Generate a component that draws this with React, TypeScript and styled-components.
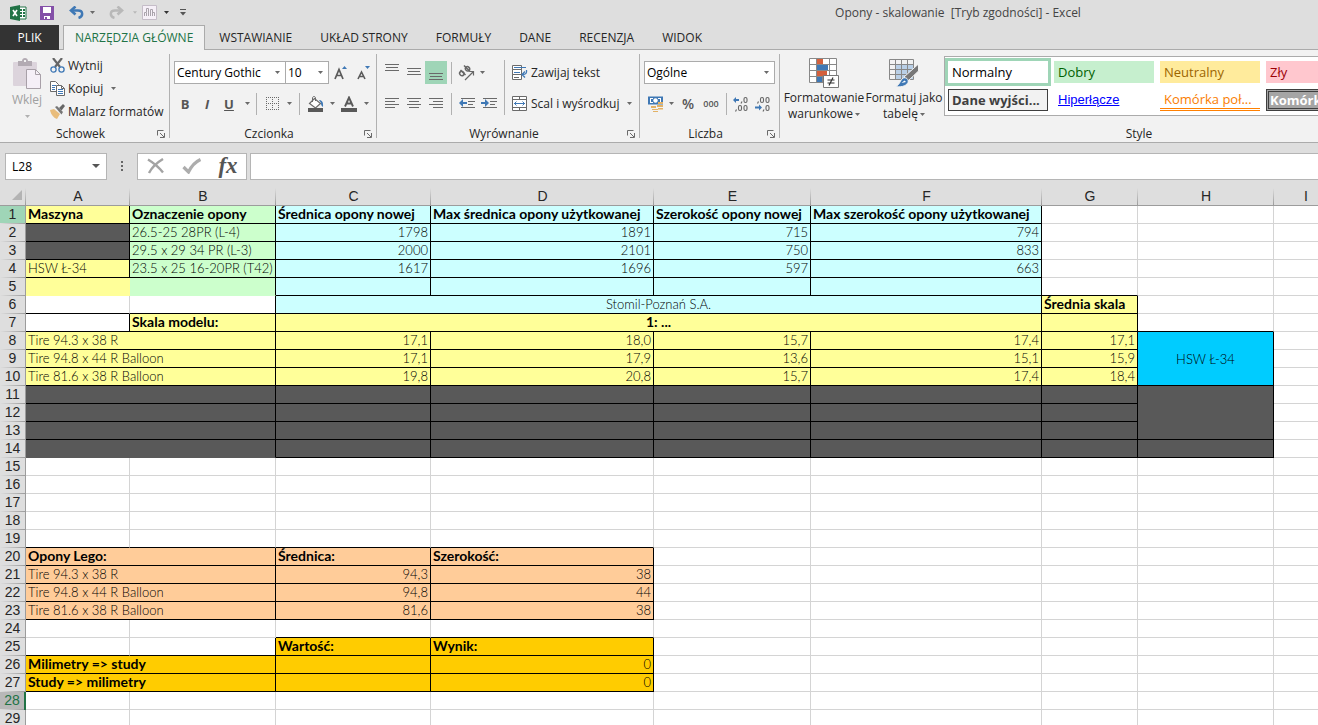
import React from "react";
import styled, { createGlobalStyle, css } from "styled-components";

const UI = `"Segoe UI", "Open Sans", "Noto Sans", sans-serif`;
const SHEET = `"Century Gothic", "Lato", sans-serif`;
const HEAD = `"Liberation Sans", Arial, sans-serif`;

const Global = createGlobalStyle`
  * { box-sizing: border-box; }
  body { margin: 0; background: #fff; }
  button, input, select { font: inherit; color: inherit; }
`;

/* ---------- frame ---------- */

const Window = styled.div`
  display: flex;
  flex-direction: column;
  height: 100vh;
  overflow: hidden;
  background: #dedede;
  color: #262626;
  font: 12px/16px ${UI};
`;

const TitleBar = styled.header`
  display: flex;
  align-items: center;
  flex: none;
  height: 25px;
`;

const QuickAccess = styled.div`
  display: flex;
  align-items: center;
  flex: none;
  width: 200px;
  height: 22px;
  padding-left: 10px;
`;

const Title = styled.h1`
  flex: 1;
  margin: 0;
  padding-left: 398px;
  font-size: 12px;
  font-weight: 400;
  line-height: 24px;
  text-align: center;
  white-space: pre;
  color: #444;
`;

const Tabs = styled.nav`
  display: flex;
  flex: none;
  height: 25px;
  border-bottom: 1px solid #ababab;
`;

const Tab = styled.button<{ $kind?: "file" | "active" }>`
  height: 25px;
  padding: 0 13px;
  border: 1px solid transparent;
  border-bottom: 0;
  background: none;
  white-space: nowrap;
  line-height: 24px;
  ${(p) => p.$kind === "file" && css`
    width: 59px;
    margin-right: 4px;
    background: #333;
    color: #fff;
  `}
  ${(p) => p.$kind === "active" && css`
    padding: 0 11px;
    border-color: #ababab;
    background: #f2f2f2;
    color: #217346;
  `}
`;

/* ---------- ribbon ---------- */

const Ribbon = styled.div`
  display: flex;
  flex: none;
  height: 93px;
  overflow: hidden;
  border-bottom: 1px solid #ababab;
  background: #f2f2f2;
`;

const Group = styled.section<{ $w: number }>`
  display: flex;
  flex-direction: column;
  flex: none;
  width: ${(p) => p.$w}px;
  padding: 4px 4px 0;
`;

const GroupBody = styled.div`
  display: flex;
  flex: none;
  height: 72px;
`;

const GroupFoot = styled.div`
  display: flex;
  align-items: center;
  height: 16px;
`;

const GroupName = styled.span`
  flex: 1;
  text-align: center;
`;

const Divider = styled.i<{ $m?: string; $h?: number }>`
  flex: none;
  width: 1px;
  height: ${(p) => (p.$h ? `${p.$h}px` : "auto")};
  margin: ${(p) => p.$m || "4px 0"};
  background: #b1b1b1;
`;

const Stack = styled.div<{ $tight?: boolean }>`
  display: flex;
  flex-direction: column;
  gap: ${(p) => (p.$tight ? 0 : 8)}px;
  padding-top: ${(p) => (p.$tight ? 0 : 7)}px;
`;

const Line = styled.div`
  display: flex;
  align-items: center;
  height: 23px;
`;

const Tool = styled.button<{ $w?: number; $on?: boolean }>`
  display: flex;
  align-items: center;
  justify-content: center;
  flex: none;
  width: ${(p) => p.$w ?? 22}px;
  height: 23px;
  padding: 0;
  border: 0;
  background: ${(p) => (p.$on ? "#9fd5b7" : "none")};
`;

const LaunchButton = styled(Tool)`
  height: 16px;
`;

const LabelTool = styled.button`
  display: flex;
  align-items: center;
  gap: 3px;
  height: 23px;
  padding: 0;
  border: 0;
  background: none;
  white-space: nowrap;
`;

const CaretBox = styled.span`
  display: flex;
  justify-content: center;
  width: 14px;
`;

const BigTool = styled.button<{ $w: number; $off?: boolean }>`
  display: flex;
  flex-direction: column;
  align-items: center;
  flex: none;
  width: ${(p) => p.$w}px;
  padding: 4px 0 0;
  border: 0;
  background: none;
  white-space: nowrap;
  color: ${(p) => (p.$off ? "#a0a0a0" : "inherit")};
  & > svg { flex: none; margin-bottom: 2px; }
`;

const BigText = styled.span`
  display: flex;
  align-items: center;
  gap: 2px;
  height: 16px;
`;

const Combo = styled.label<{ $w: number }>`
  display: flex;
  align-items: center;
  position: relative;
  flex: none;
  width: ${(p) => p.$w}px;
  height: 23px;
  border: 1px solid #ababab;
  background: #fff;
  color: #000;
  & + & { margin-left: -1px; }
  select {
    flex: 1;
    min-width: 0;
    height: 21px;
    padding: 0 16px 0 2px;
    border: 0;
    background: none;
    appearance: none;
    outline: 0;
  }
  svg { position: absolute; right: 5px; pointer-events: none; }
`;

const Glyph = styled.span<{ $size?: number; $weight?: number; $italic?: boolean; $under?: boolean }>`
  font-size: ${(p) => p.$size ?? 13}px;
  font-weight: ${(p) => p.$weight ?? 700};
  font-style: ${(p) => (p.$italic ? "italic" : "normal")};
  text-decoration: ${(p) => (p.$under ? "underline" : "none")};
  line-height: 20px;
  color: #555;
`;

const Gallery = styled.div`
  display: grid;
  grid-template-columns: repeat(5, 100px);
  grid-auto-rows: 22px;
  gap: 6px;
  flex: 1;
  height: 60px;
  margin-top: 2px;
  padding: 4px 3px;
  overflow: hidden;
  border: 1px solid #ababab;
  background: #fff;
`;

type Look = "normal" | "good" | "neutral" | "bad" | "output" | "link" | "linked" | "check";

const looks: Record<Look, ReturnType<typeof css>> = {
  normal: css`color: #000; background: #fff; outline: 3px solid #9fd5b7;`,
  good: css`color: #006100; background: #c6efce;`,
  neutral: css`color: #9c6500; background: #ffeb9c;`,
  bad: css`color: #9c0006; background: #ffc7ce;`,
  output: css`padding: 0 3px; color: #3f3f3f; background: #f2f2f2; border: 1px solid #3f3f3f; font-weight: 700;`,
  link: css`color: #0000ff; font-family: ${HEAD}; text-decoration: underline;`,
  linked: css`color: #fa7d00; border-bottom: 3px double #ff8001;`,
  check: css`padding: 0 1px; color: #fff; background: #a5a5a5; border: 3px double #3f3f3f; font-weight: 700;`,
};

const StyleItem = styled.button<{ $look: Look }>`
  width: 100px;
  height: 22px;
  padding: 0 4px;
  overflow: hidden;
  border: 0;
  background: none;
  font-size: 13px;
  line-height: 16px;
  text-align: left;
  white-space: nowrap;
  ${(p) => looks[p.$look]}
`;

/* ---------- formula bar ---------- */

const FormulaBar = styled.div`
  display: flex;
  align-items: center;
  flex: none;
  height: 45px;
  padding: 1px 0 0 5px;
`;

const Field = styled.div<{ $w?: number }>`
  display: flex;
  align-items: center;
  flex: ${(p) => (p.$w ? "none" : "1")};
  width: ${(p) => (p.$w ? `${p.$w}px` : "auto")};
  height: 27px;
  border: 1px solid #b5b5b5;
  background: #fff;
  color: #000;
  & + & { margin-left: 3px; border-right: 0; }
  input {
    flex: 1;
    min-width: 0;
    height: 25px;
    padding: 0 6px;
    border: 0;
    background: none;
    outline: 0;
  }
`;

const Dots = styled.span`
  display: flex;
  justify-content: center;
  width: 30px;
`;

/* ---------- sheet ---------- */

const SheetArea = styled.main`
  flex: 1;
  min-height: 0;
  overflow: hidden;
  background: #fff;
`;

const Sheet = styled.table`
  width: 100%;
  min-width: 1338px;
  table-layout: fixed;
  border-spacing: 0;
  color: #000;
`;

const ColHead = styled.th`
  height: 18px;
  padding: 0;
  border-bottom: 1px solid #9c9c9c;
  background: linear-gradient(#dedede, #9c9c9c) right / 1px 100% no-repeat #dedede;
  font: 14px/17px ${HEAD};
  text-align: center;
  color: #262626;
`;

const RowHead = styled.th<{ $state?: "hover" | "active" }>`
  height: 18px;
  padding: 0;
  border-right: 1px solid #9c9c9c;
  background: linear-gradient(90deg, #dedede, #9c9c9c) bottom / 100% 1px no-repeat #dedede;
  font: 14px/16px ${HEAD};
  vertical-align: top;
  text-align: center;
  color: #262626;
  ${(p) => p.$state === "hover" && css`background-color: #9fd5b7;`}
  ${(p) => p.$state === "active" && css`
    border-right: 2px solid #217346;
    background-color: #b8b8b8;
    color: #217346;
  `}
`;

const Cell = styled.td<{ $bg?: string; $r?: string; $b?: string; $align?: string; $bold?: boolean }>`
  height: 18px;
  padding: 0 2px;
  overflow: hidden;
  border-right: 1px solid ${(p) => p.$r || "#d4d4d4"};
  border-bottom: 1px solid ${(p) => p.$b || "#d4d4d4"};
  background: ${(p) => p.$bg || "#fff"};
  font: ${(p) => (p.$bold ? "700 14px" : "300 13px")}/16px ${SHEET};
  text-align: ${(p) => p.$align || "left"};
  vertical-align: ${(p) => ((p as { rowSpan?: number }).rowSpan ? "middle" : "top")};
  white-space: nowrap;
`;

/* ---------- icons ---------- */

const G = "#6a6a6a";
const B = "#3f78b5";

const Svg = ({ w, h, children }: { w: number; h: number; children: React.ReactNode }) => (
  <svg width={w} height={h} viewBox={`0 0 ${w} ${h}`} fill="none" aria-hidden="true">{children}</svg>
);

const Caret = ({ c = "#6a6a6a" }: { c?: string }) => (
  <Svg w={5} h={3}><path d="M0 0h5L2.5 3z" fill={c} /></Svg>
);

const ExcelLogo = () => (
  <Svg w={17} h={16}>
    <path d="M9 2h7v12H9z" fill="#fff" stroke="#217346" />
    <path d="M10 4h2v2h-2zM13 4h2v2h-2zM10 7h2v2h-2zM13 7h2v2h-2zM10 10h2v2h-2zM13 10h2v2h-2z" fill="#217346" />
    <path d="M0 2l10-2v16L0 14z" fill="#217346" />
    <path d="M3 5l4 6M7 5l-4 6" stroke="#fff" strokeWidth="1.6" />
  </Svg>
);

const SaveIcon = () => (
  <Svg w={14} h={14}>
    <path d="M0 0h14v14H0z" fill="#8450a8" />
    <path d="M3 1h8v6H3z" fill="#fff" />
    <path d="M4 10h6v3H4z" fill="#fff" />
    <path d="M5 11h2v2H5z" fill="#8450a8" />
  </Svg>
);

const UndoIcon = ({ c, flip }: { c: string; flip?: boolean }) => (
  <Svg w={15} h={13}>
    <g transform={flip ? "translate(15 0) scale(-1 1)" : undefined} stroke={c}>
      <path d="M6.500 .5L2 4.500l4.500 4" strokeWidth="2.600" />
      <path d="M2 4.500h7c5.500 0 5.500 6 .5 7.500" strokeWidth="2.400" />
    </g>
  </Svg>
);

const ChartIcon = () => (
  <Svg w={15} h={15}>
    <path d="M.5.5h14v14H.5z" fill="#f6f0f8" stroke="#c5bdc8" />
    <path d="M2.500 11V7.500h2V11M4.500 7V3.500h2V11M8.500 11V4.500h2V11M10.500 7.500h2V11" stroke="#a9a3ab" />
  </Svg>
);

const CustomizeIcon = () => (
  <Svg w={6} h={7}><path d="M0 .5h6" stroke="#555" /><path d="M0 3h6L3 6.500z" fill="#555" /></Svg>
);

const PasteIcon = () => (
  <Svg w={30} h={32}>
    <rect x="1" y="4" width="24" height="24" rx="1" fill="#dcd4dc" />
    <path d="M6 3h4c0-4 6-4 6 0h4v5H6z" fill="#b3abb3" />
    <path d="M12 2h2v2h-2z" fill="#f2f2f2" />
    <path d="M14.500 11.500h9l5 5v14h-14z" fill="#f5eff7" stroke="#a8a0a8" />
    <path d="M23.500 11.500v5h5" stroke="#a8a0a8" />
  </Svg>
);

const CutIcon = () => (
  <Svg w={15} h={15}>
    <path d="M3 0l7 9M12 0L5 9" stroke="#666" strokeWidth="2.200" />
    <circle cx="3.500" cy="11.500" r="2.600" stroke={B} strokeWidth="1.300" />
    <circle cx="11.500" cy="11.500" r="2.600" stroke={B} strokeWidth="1.300" />
  </Svg>
);

const CopyIcon = () => (
  <Svg w={15} h={15}>
    <path d="M.5.5h5l3 3v7h-8z" fill="#fff" stroke={G} />
    <path d="M2 4.500h4M2 6.500h3M2 8.500h3" stroke={B} />
    <path d="M6.500 4.500h5l3 3v7h-8z" fill="#fff" stroke={G} />
    <path d="M11.500 4.500v3h3" stroke={G} />
    <path d="M8 8.500h5M8 10.500h5M8 12.500h5" stroke={B} />
  </Svg>
);

const BrushIcon = () => (
  <Svg w={15} h={15}>
    <path d="M0 6l4-1 6 5-3 5c-3-1-6-4-7-9z" fill="#e9bd7c" />
    <path d="M5 3l2-1 6 6-1.500 2.500z" fill="#777" />
    <path d="M9 4l4-4 2 2-3.500 4.500z" fill="#666" />
  </Svg>
);

const ResizeFont = ({ up }: { up?: boolean }) => (
  <Svg w={14} h={16}>
    {up
      ? <path d="M1 14L5 4.500 9 14M2.600 10.500h5" stroke="#5a5a5a" strokeWidth="1.700" />
      : <path d="M1 14L4.500 7 8 14M2.400 11.500h4.200" stroke="#5a5a5a" strokeWidth="1.600" />}
    <path d={up ? "M8 4h5l-2.500-3z" : "M8 1h5l-2.500 3z"} fill={B} />
  </Svg>
);

const BorderIcon = () => (
  <Svg w={13} h={13}>
    <path d="M0 .5h13M0 6.500h13M0 12.500h13M.5 0v13M6.500 0v13M12.500 0v13" stroke={G} strokeDasharray="1 1" />
  </Svg>
);

const BucketIcon = () => (
  <Svg w={17} h={16}>
    <path d="M2.500 7.500l5-5 6 5-5 4.500z" fill="#fff" stroke={G} strokeWidth="1.200" />
    <path d="M5.500 6V2c0-2 3-2 3 0v3" stroke={G} />
    <path d="M12 4c3 0 4.500 2 4 7-2-1-2-3-2-4z" fill={B} />
    <path d="M1 12h15v4H1z" fill="#595959" />
  </Svg>
);

const FontColorIcon = () => (
  <Svg w={16} h={16}>
    <path d="M4 10.500L8 1.500l4 9M5.500 7.500h5" stroke="#5a5a5a" strokeWidth="1.900" />
    <path d="M0 12h16v4H0z" fill="#595959" />
  </Svg>
);

const Rules = ({ rows, y = 0 }: { rows: [number, number][]; y?: number }) => (
  <Svg w={14} h={17}>
    {rows.map(([x, len], i) => <path key={i} d={`M${x} ${y + i * 3}.5h${len}`} stroke={G} />)}
  </Svg>
);

const OrientIcon = () => (
  <Svg w={18} h={16}>
    <g stroke="#666" strokeWidth="1.500">
      <ellipse cx="3.800" cy="8.500" rx="2" ry="2.300" transform="rotate(-45 3.800 8.500)" />
      <path d="M2.500 5l5 5M6 .5l6 6" />
      <ellipse cx="9.500" cy="3.800" rx="2" ry="2.200" transform="rotate(-45 9.500 3.800)" />
      <path d="M7 15l8.500-8.500M11.500 6.500h4v4" strokeWidth="1.200" />
    </g>
  </Svg>
);

const IndentIcon = ({ out }: { out?: boolean }) => (
  <Svg w={16} h={11}>
    <path d="M2 .5h14M9 3.500h7M9 6.500h5M2 9.500h14" stroke={G} />
    {out
      ? <path d="M0 5l4-4v3h4v2H4v3z" fill={B} />
      : <path d="M8 5L4 1v3H0v2h4v3z" fill={B} />}
  </Svg>
);

const WrapIcon = () => (
  <Svg w={16} h={15}>
    <path d="M.5.5h9v4h-9zM.5 4.500h9v5h-9zM.5 9.500h9v5h-9z" stroke={G} fill="#fff" />
    <path d="M2 2.500h12M2 7.500h6" stroke={B} />
    <path d="M2 12.500h5" stroke={G} />
    <path d="M14.500 5c.5 3-.5 4.500-4 4.500M13 6.500l-3 3 3 3" stroke={B} strokeWidth="1.300" />
  </Svg>
);

const MergeIcon = () => (
  <Svg w={16} h={15}>
    <path d="M.5.5h14v14H.5zM.5 3.500h14M.5 11.500h14M7.500.5v3M7.500 11.500v3" stroke={G} fill="#fff" />
    <path d="M2 7.500h11M4.500 5.500l-2 2 2 2M10.500 5.500l2 2-2 2" stroke={B} />
  </Svg>
);

const MoneyIcon = () => (
  <Svg w={17} h={16}>
    <path d="M1 .5h15v8H1z" fill={B} />
    <path d="M3 2h3v1H4v3h2v1H3zM14 2h-3v1h2v3h-2v1h3z" fill="#fff" />
    <circle cx="8.500" cy="4.500" r="2.200" fill="#fff" />
    <path d="M11 6h5v2h-5zM10 9h6v2h-6zM4 10h5v2H4zM5 13h6v1H5zM6 15h5v1H6zM11 12h5v1.500h-5z" fill="#e3b266" />
  </Svg>
);

const DecimalIcon = ({ more }: { more?: boolean }) => (
  <Svg w={16} h={16}>
    <g stroke="#666" strokeWidth="1.100">
      <path d={more ? "M9 5.500l-1 2" : "M3.500 5.500l-1 2"} />
      {!more && <rect x="5.500" y="1.500" width="3" height="5" rx="1.500" />}
      <rect x="11" y="1.500" width="3" height="5" rx="1.500" />
      <rect x="11" y="9.500" width="3" height="5" rx="1.500" />
      {more && <rect x="5.500" y="9.500" width="3" height="5" rx="1.500" />}
      <path d={more ? "M3.500 13.500l-1 2" : "M9 13.500l-1 2"} />
    </g>
    <path d={more ? "M0 4l3-3v2h3v2H3v2z" : "M7 11.500L4 8.500v2H0v2h4v2z"} fill={B} />
  </Svg>
);

const CondIcon = () => (
  <Svg w={30} h={30}>
    <path d="M.5.5h27v24H.5zM.5 6.500h27M.5 12.500h27M.5 18.500h27M7.500.5v24M13.500.5v24M20.500.5v24" fill="#fff" stroke="#888" />
    <path d="M8 1h6v5H8zM8 13h10v5H8z" fill="#d4603c" />
    <path d="M8 7h11v5H8zM8 19h5v5H8z" fill={B} />
    <path d="M14.500 17.500h15v12h-15z" fill="#fff" stroke="#777" />
    <path d="M18.500 22h7M18.500 25h7M24 19.500l-4 8" stroke="#333" strokeWidth="1.200" />
  </Svg>
);

const TableIcon = () => (
  <Svg w={30} h={30}>
    <path d="M7 7h18v14H7z" fill="#b9cfe6" />
    <path d="M.5 1.500h24v20H.5zM.5 6.500h24M.5 11.500h24M.5 16.500h24M6.500 1.500v20M12.500 1.500v20M18.500 1.500v20" stroke="#888" />
    <path d="M29.500 6v7L19 23l-4-4z" fill="#777" stroke="#f2f2f2" />
    <path d="M6 28.500c4 0 5-6 8-8.500 3-1 6 1 5 4.500-2 4-8 5-13 4z" fill={B} stroke="#f2f2f2" />
    <path d="M12.500 25l3-2.500 1.500 1.500z" fill="#fff" />
  </Svg>
);

const Launcher = () => (
  <Svg w={8} h={8}>
    <path d="M.5 5.500v-5h6" stroke={G} />
    <path d="M3 3l4 4M7.500 3v4.500H3" stroke={G} />
  </Svg>
);

const CancelIcon = () => (
  <Svg w={18} h={16}><path d="M1 1.500c5 3 11 8 15 13M16 1C11 4 5 9 2 15" stroke="#a3a3a3" strokeWidth="2.400" /></Svg>
);

const EnterIcon = () => (
  <Svg w={20} h={16}><path d="M1.500 9l5 5C9 9 13 4 18.500 1.500" stroke="#adadad" strokeWidth="3.200" /></Svg>
);

const FxGlyph = styled.span`
  font: italic 700 23px/24px "Liberation Serif", serif;
  color: #555;
`;

/* ---------- data ---------- */

type C = { t?: string; bg?: string; r?: string; b?: string; al?: string; bold?: boolean; span?: number; rows?: number };

const K = "#000";
const YEL = "#ffff99";
const GRN = "#ccffcc";
const CYN = "#ccffff";
const DRK = "#595959";
const ORG = "#ffcc99";
const GLD = "#ffcc00";

const box = (bg: string, t = "", o: C = {}): C => ({ bg, t, r: K, b: K, ...o });
const num = (bg: string, t: string): C => box(bg, t, { al: "right" });
const blank = (n: number, o: C = {}): C[] => Array.from({ length: n }, () => ({ ...o }));
const head = (bg: string, t: string, o: C = {}) => box(bg, t, { bold: true, ...o });

const measure = (a: C, b: string, v: string[]): C[] => [
  a, box(GRN, b), ...v.map((x) => num(CYN, x)), ...blank(3),
];
const scale = (t: string, v: string[]): C[] => [box(YEL, t, { span: 2 }), ...v.map((x) => num(YEL, x))];
const dark = (): C[] => [box(DRK, "", { span: 2 }), ...Array.from({ length: 5 }, () => box(DRK))];

const rows: C[][] = [
  [head(YEL, "Maszyna"), head(GRN, "Oznaczenie opony"), head(CYN, "Średnica opony nowej"),
    head(CYN, "Max średnica opony użytkowanej"), head(CYN, "Szerokość opony nowej"),
    head(CYN, "Max szerokość opony użytkowanej"), ...blank(3)],
  measure(box(DRK), "26.5-25 28PR (L-4)", ["1798", "1891", "715", "794"]),
  measure(box(DRK), "29.5 x 29 34 PR (L-3)", ["2000", "2101", "750", "833"]),
  measure(box(YEL, "HSW Ł-34"), "23.5 x 25 16-20PR (T42)", ["1617", "1696", "597", "663"]),
  [{ bg: YEL, r: YEL, b: YEL }, { bg: GRN, r: K, b: GRN }, ...Array.from({ length: 4 }, () => box(CYN)), { b: K }, ...blank(2)],
  [{ b: K }, { r: K, b: K }, box(CYN, "Stomil-Poznań S.A.", { span: 4, al: "center" }), head(YEL, "Średnia skala"), ...blank(2)],
  [{ r: K, b: K }, head(YEL, "Skala modelu:"), head(YEL, "1: ...", { span: 4, al: "center" }), box(YEL), { b: K }, {}],
  [...scale("Tire 94.3 x 38 R", ["17,1", "18,0", "15,7", "17,4", "17,1"]), box("#00ccff", "HSW Ł-34", { rows: 3, al: "center" }), {}],
  [...scale("Tire 94.8 x 44 R Balloon", ["17,1", "17,9", "13,6", "15,1", "15,9"]), {}],
  [...scale("Tire 81.6 x 38 R Balloon", ["19,8", "20,8", "15,7", "17,4", "18,4"]), {}],
  [...dark(), box(DRK, "", { rows: 3 }), {}],
  [...dark(), {}],
  [...dark(), {}],
  [box(DRK, "", { span: 2, b: DRK }), ...Array.from({ length: 6 }, () => box(DRK)), {}],
  blank(9), blank(9), blank(9), blank(9),
  [...blank(4, { b: K }), ...blank(5)],
  [head(ORG, "Opony Lego:", { span: 2 }), head(ORG, "Średnica:"), head(ORG, "Szerokość:"), ...blank(5)],
  [box(ORG, "Tire 94.3 x 38 R", { span: 2 }), num(ORG, "94,3"), num(ORG, "38"), ...blank(5)],
  [box(ORG, "Tire 94.8 x 44 R Balloon", { span: 2 }), num(ORG, "94,8"), num(ORG, "44"), ...blank(5)],
  [box(ORG, "Tire 81.6 x 38 R Balloon", { span: 2 }), num(ORG, "81,6"), num(ORG, "38"), ...blank(5)],
  [...blank(2), ...blank(2, { b: K }), ...blank(5)],
  [{ b: K }, { r: K, b: K }, head(GLD, "Wartość:"), head(GLD, "Wynik:"), ...blank(5)],
  [head(GLD, "Milimetry => study", { span: 2 }), box(GLD), num(GLD, "0"), ...blank(5)],
  [head(GLD, "Study => milimetry", { span: 2 }), box(GLD), num(GLD, "0"), ...blank(5)],
  blank(9), blank(9),
];

const columns: [string, number | undefined][] = [
  ["A", 104], ["B", 146], ["C", 155], ["D", 223], ["E", 157], ["F", 231], ["G", 96], ["H", 136], ["I", undefined],
];

const tabs = ["WSTAWIANIE", "UKŁAD STRONY", "FORMUŁY", "DANE", "RECENZJA", "WIDOK"];

const gallery: [string, Look][] = [
  ["Normalny", "normal"], ["Dobry", "good"], ["Neutralny", "neutral"], ["Zły", "bad"],
  ["Dane wyjści...", "output"], ["Hiperłącze", "link"], ["Komórka poł...", "linked"], ["Komórka zaz...", "check"],
];

const Foot = ({ name, plain }: { name: string; plain?: boolean }) => (
  <GroupFoot>
    <GroupName>{name}</GroupName>
    {!plain && <LaunchButton $w={8} aria-label={`${name} – opcje`}><Launcher /></LaunchButton>}
  </GroupFoot>
);

export default function App() {
  return (
    <Window>
      <Global />
      <TitleBar>
        <QuickAccess>
          <ExcelLogo />
          <Tool $w={40} aria-label="Zapisz"><SaveIcon /></Tool>
          <Tool $w={18} aria-label="Cofnij"><UndoIcon c={B} /></Tool>
          <Tool $w={14} aria-label="Lista cofania"><Caret /></Tool>
          <Tool $w={34} aria-label="Wykonaj ponownie"><UndoIcon c="#b8b8b8" flip /></Tool>
          <Tool $w={4} aria-label="Lista ponawiania"><Caret c="#b8b8b8" /></Tool>
          <Tool $w={24} aria-label="Wykres"><ChartIcon /></Tool>
          <Tool $w={10} aria-label="Lista wykresów"><Caret c="#333" /></Tool>
          <Tool $w={24} aria-label="Dostosuj pasek"><CustomizeIcon /></Tool>
        </QuickAccess>
        <Title>{"Opony - skalowanie  [Tryb zgodności] - Excel"}</Title>
      </TitleBar>

      <Tabs>
        <Tab $kind="file">PLIK</Tab>
        <Tab $kind="active">NARZĘDZIA GŁÓWNE</Tab>
        {tabs.map((t) => <Tab key={t}>{t}</Tab>)}
      </Tabs>

      <Ribbon>
        <Group $w={169}>
          <GroupBody>
            <BigTool $w={46} $off>
              <PasteIcon />
              <BigText>Wklej</BigText>
              <BigText><Caret c="#b0b0b0" /></BigText>
            </BigTool>
            <Stack $tight>
              <LabelTool><CutIcon />Wytnij</LabelTool>
              <LabelTool><CopyIcon />Kopiuj<CaretBox><Caret /></CaretBox></LabelTool>
              <LabelTool><BrushIcon />Malarz formatów</LabelTool>
            </Stack>
          </GroupBody>
          <Foot name="Schowek" />
        </Group>
        <Divider />

        <Group $w={206}>
          <GroupBody>
            <Stack>
              <Line>
                <Combo $w={112}>
                  <select aria-label="Czcionka"><option>Century Gothic</option></select>
                  <Caret />
                </Combo>
                <Combo $w={44}>
                  <select aria-label="Rozmiar czcionki"><option>10</option></select>
                  <Caret />
                </Combo>
                <Tool $w={24} aria-label="Zwiększ rozmiar czcionki"><ResizeFont up /></Tool>
                <Tool aria-label="Zmniejsz rozmiar czcionki"><ResizeFont /></Tool>
              </Line>
              <Line>
                <Tool aria-label="Pogrubienie"><Glyph>B</Glyph></Tool>
                <Tool aria-label="Kursywa"><Glyph $italic>I</Glyph></Tool>
                <Tool aria-label="Podkreślenie"><Glyph $under>U</Glyph></Tool>
                <Tool $w={14} aria-label="Styl podkreślenia"><Caret /></Tool>
                <Divider $m="0 4px 0 2px" $h={22} />
                <Tool aria-label="Obramowanie"><BorderIcon /></Tool>
                <Tool $w={12} aria-label="Rodzaj obramowania"><Caret /></Tool>
                <Divider $m="0 4px" $h={22} />
                <Tool aria-label="Kolor wypełnienia"><BucketIcon /></Tool>
                <Tool $w={12} aria-label="Wybór wypełnienia"><Caret /></Tool>
                <Tool aria-label="Kolor czcionki"><FontColorIcon /></Tool>
                <Tool $w={12} aria-label="Wybór koloru"><Caret /></Tool>
              </Line>
            </Stack>
          </GroupBody>
          <Foot name="Czcionka" />
        </Group>
        <Divider />

        <Group $w={262}>
          <GroupBody>
            <Stack>
              <Line>
                <Tool aria-label="Do góry"><Rules y={0} rows={[[0, 14], [1, 12], [0, 14]]} /></Tool>
                <Tool aria-label="Do środka"><Rules y={4} rows={[[0, 14], [1, 12], [0, 14]]} /></Tool>
                <Tool $on aria-label="Do dołu"><Rules y={9} rows={[[0, 14], [1, 12], [0, 14]]} /></Tool>
                <Divider $m="0 4px" $h={22} />
                <Tool aria-label="Orientacja"><OrientIcon /></Tool>
                <Tool $w={8} aria-label="Kierunek tekstu"><Caret /></Tool>
              </Line>
              <Line>
                <Tool aria-label="Do lewej"><Rules y={3} rows={[[0, 14], [0, 10], [0, 14], [0, 10]]} /></Tool>
                <Tool aria-label="Wyśrodkuj"><Rules y={3} rows={[[0, 14], [2, 10], [0, 14], [2, 10]]} /></Tool>
                <Tool aria-label="Do prawej"><Rules y={3} rows={[[0, 14], [4, 10], [0, 14], [4, 10]]} /></Tool>
                <Divider $m="0 4px" $h={22} />
                <Tool aria-label="Zmniejsz wcięcie"><IndentIcon out /></Tool>
                <Tool aria-label="Zwiększ wcięcie"><IndentIcon /></Tool>
              </Line>
            </Stack>
            <Divider $m="6px 7px 0 4px" $h={55} />
            <Stack>
              <LabelTool><WrapIcon />Zawijaj tekst</LabelTool>
              <LabelTool><MergeIcon />Scal i wyśrodkuj<CaretBox><Caret /></CaretBox></LabelTool>
            </Stack>
          </GroupBody>
          <Foot name="Wyrównanie" />
        </Group>
        <Divider />

        <Group $w={139}>
          <GroupBody>
            <Stack>
              <Line>
                <Combo $w={131}>
                  <select aria-label="Format liczb"><option>Ogólne</option></select>
                  <Caret />
                </Combo>
              </Line>
              <Line>
                <Tool aria-label="Format księgowy"><MoneyIcon /></Tool>
                <Tool $w={10} aria-label="Waluta"><Caret /></Tool>
                <Tool $w={24} aria-label="Zapis procentowy"><Glyph $size={14} $weight={600}>%</Glyph></Tool>
                <Tool aria-label="Zapis dziesiętny"><Glyph $size={9} $weight={600}>000</Glyph></Tool>
                <Divider $m="0 3px 0 4px" $h={22} />
                <Tool aria-label="Zwiększ dziesiętne"><DecimalIcon more /></Tool>
                <Tool aria-label="Zmniejsz dziesiętne"><DecimalIcon /></Tool>
              </Line>
            </Stack>
          </GroupBody>
          <Foot name="Liczba" />
        </Group>
        <Divider />

        <Group $w={718}>
          <GroupBody>
            <BigTool $w={80}>
              <CondIcon />
              <BigText>Formatowanie</BigText>
              <BigText>warunkowe<Caret /></BigText>
            </BigTool>
            <BigTool $w={80}>
              <TableIcon />
              <BigText>Formatuj jako</BigText>
              <BigText>tabelę<Caret /></BigText>
            </BigTool>
            <Gallery>
              {gallery.slice(0, 4).map(([t, l]) => <StyleItem key={t} $look={l}>{t}</StyleItem>)}
              <span />
              {gallery.slice(4).map(([t, l]) => <StyleItem key={t} $look={l}>{t}</StyleItem>)}
            </Gallery>
          </GroupBody>
          <Foot name="Style" plain />
        </Group>
      </Ribbon>

      <FormulaBar>
        <Field $w={102}>
          <input aria-label="Pole nazwy" defaultValue="L28" />
          <Tool $w={20} aria-label="Lista nazw"><Svg w={8} h={4}><path d="M0 0h8L4 4z" fill="#555" /></Svg></Tool>
        </Field>
        <Dots>
          <Svg w={2} h={10}><path d="M0 0h2v2H0zM0 4h2v2H0zM0 8h2v2H0z" fill="#666" /></Svg>
        </Dots>
        <Field $w={110}>
          <Tool $w={36} aria-label="Anuluj"><CancelIcon /></Tool>
          <Tool $w={36} aria-label="Wpis"><EnterIcon /></Tool>
          <Tool $w={36} aria-label="Wstaw funkcję"><FxGlyph>fx</FxGlyph></Tool>
        </Field>
        <Field><input aria-label="Pasek formuły" /></Field>
      </FormulaBar>

      <SheetArea>
        <Sheet>
          <colgroup>
            <col width={26} />
            {columns.map(([c, w]) => <col key={c} width={w} />)}
          </colgroup>
          <thead>
            <tr>
              <ColHead aria-label="Zaznacz wszystko">
                <Svg w={26} h={12}><path d="M22 1v10H12z" fill="#b3b3b3" /></Svg>
              </ColHead>
              {columns.map(([c]) => <ColHead key={c} scope="col">{c}</ColHead>)}
            </tr>
          </thead>
          <tbody>
            {rows.map((cells, i) => (
              <tr key={i}>
                <RowHead scope="row" $state={i === 0 ? "hover" : i === 27 ? "active" : undefined}>{i + 1}</RowHead>
                {cells.map((c, j) => (
                  <Cell key={j} colSpan={c.span} rowSpan={c.rows} $bg={c.bg} $r={c.r} $b={c.b} $align={c.al} $bold={c.bold}>
                    {c.t}
                  </Cell>
                ))}
              </tr>
            ))}
          </tbody>
        </Sheet>
      </SheetArea>
    </Window>
  );
}
